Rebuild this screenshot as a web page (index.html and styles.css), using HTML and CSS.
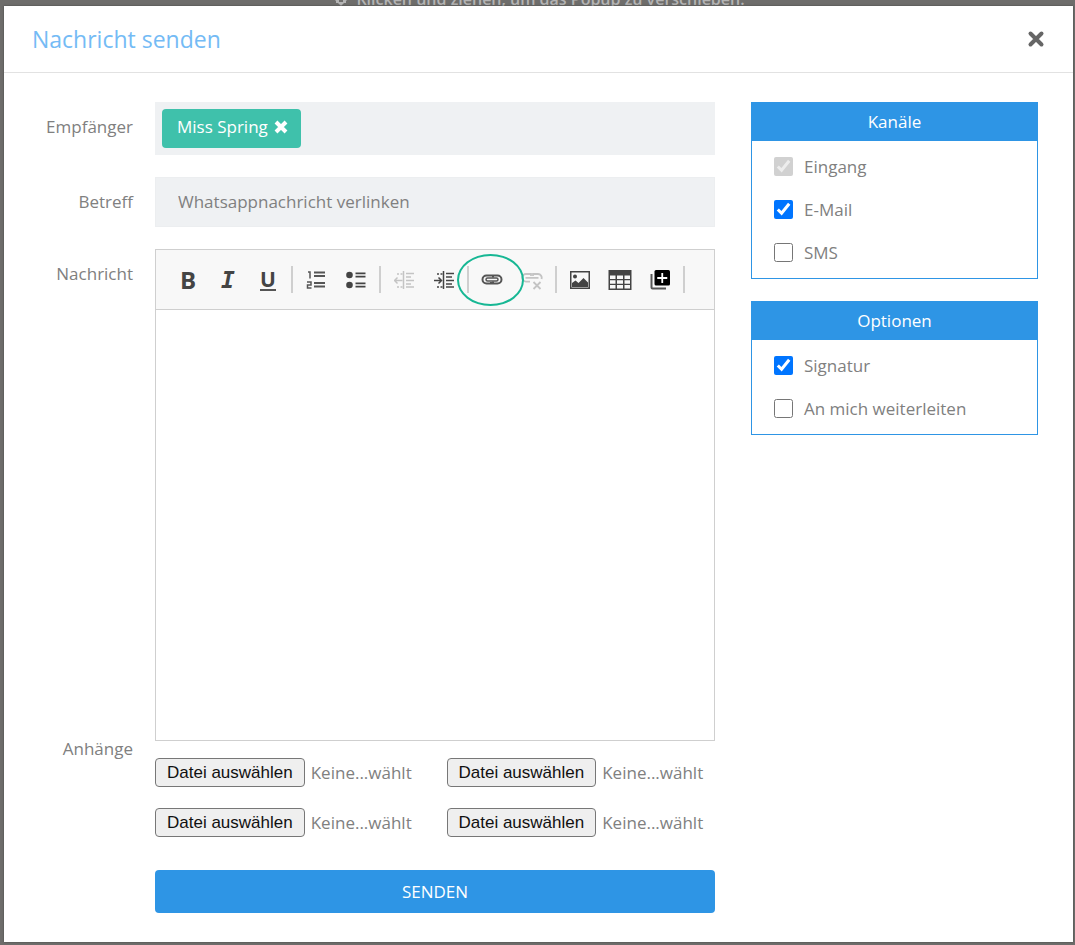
FILE: index.html
```html
<!DOCTYPE html>
<html lang="de">
<head>
<meta charset="utf-8">
<meta name="viewport" content="width=device-width, initial-scale=1">
<title>Nachricht senden</title>
<link rel="stylesheet" href="styles.css">
</head>
<body class="page">
<div class="drag-hint">
  <svg class="drag-icon" viewBox="0 0 18 18" aria-hidden="true"><path d="M9 0l4 4H5zM9 18l-4-4h8zM0 9l4-4v8zM18 9l-4 4V5z"/><path d="M2 8h14v2H2zM4 11h3v4H4zM11 11h3v4h-3z"/></svg>
  <span>Klicken und ziehen, um das Popup zu verschieben.</span>
</div>
<main class="dialog" role="dialog" aria-labelledby="title">
  <header class="dialog-head">
    <h1 class="title" id="title">Nachricht senden</h1>
    <button class="close" type="button" aria-label="Schließen">
      <svg width="18" height="18" viewBox="0 0 18 18"><path d="M3.500 3.500l11 11M14.500 3.500l-11 11"/></svg>
    </button>
  </header>
  <form class="dialog-body">
    <div class="fields">
      <div class="row">
        <span class="label label-first">Empfänger</span>
        <div class="recipients">
          <span class="tag">Miss Spring
            <button class="tag-remove" type="button" aria-label="Entfernen"><svg width="14" height="14" viewBox="0 0 14 14"><path d="M2 2l10 10M12 2L2 12"/></svg></button>
          </span>
        </div>
      </div>
      <div class="row">
        <label class="label label-first" for="subject">Betreff</label>
        <input class="subject" id="subject" type="text" value="Whatsappnachricht verlinken">
      </div>
      <div class="row">
        <label class="label label-first" for="message">Nachricht</label>
        <div class="editor">
          <div class="toolbar" role="toolbar">
            <button class="tool glyph-b" type="button" aria-label="Fett">B</button>
            <button class="tool glyph-i" type="button" aria-label="Kursiv">I</button>
            <button class="tool glyph-u" type="button" aria-label="Unterstrichen"><span class="underlined">U</span></button>
            <span class="sep"></span>
            <button class="tool" type="button" aria-label="Nummerierte Liste">
              <svg width="20" height="20" viewBox="0 0 20 20" fill="none" stroke="#555" stroke-width="1.500"><path d="M2 2h2v6.500M1 12h4v3H1.500v3H5.500"/><path d="M8 2.500h11M8 6h11M8 13h11M8 16.500h11" stroke-width="2"/></svg>
            </button>
            <button class="tool" type="button" aria-label="Aufzählung">
              <svg width="20" height="20" viewBox="0 0 20 20" fill="#444"><circle cx="3.500" cy="5" r="3.300"/><circle cx="3.500" cy="15" r="3.300"/><path d="M9.500 2.500h10v1.800h-10zM9.500 5.700h10v1.800h-10zM9.500 12.500h10v1.800h-10zM9.500 15.700h10v1.800h-10z"/></svg>
            </button>
            <span class="sep"></span>
            <button class="tool" type="button" aria-label="Einzug verkleinern" disabled>
              <svg width="20" height="20" viewBox="0 0 20 20" fill="none" stroke="#c4c4c4" stroke-width="1.500"><path d="M9.500 1v18"/><path d="M12 3.500h8M12 7h5M12 10.500h8M12 14h5M12 17h8M0.500 10.500h8M3.500 7.500l-3 3 3 3"/><path d="M3 4h2M6.500 4h2M3 17h2M6.500 17h2"/></svg>
            </button>
            <button class="tool" type="button" aria-label="Einzug vergrößern">
              <svg width="20" height="20" viewBox="0 0 20 20" fill="none" stroke="#444" stroke-width="1.500"><path d="M9.500 1v18"/><path d="M12 3.500h8M12 7h6M12 10.500h8M12 14h6M12 17h8M0 10.500h7M4.500 7.500l3 3-3 3"/><path d="M3 4h2M6.500 4h2M3 17h2M6.500 17h2"/></svg>
            </button>
            <span class="sep"></span>
            <button class="tool tool-marked" type="button" aria-label="Link einfügen">
              <svg width="22" height="20" viewBox="0 0 22 20" fill="none" stroke="#555" stroke-width="2"><path d="M10 6.500V5.500H5.500a4 4 0 0 0 0 8H10V12M12 7.500v-2h4.500a4 4 0 0 1 0 8H12v-2"/><rect x="5" y="8" width="12" height="3" rx="1.500" stroke-width="1.500"/></svg>
              <span class="marker"></span>
            </button>
            <button class="tool" type="button" aria-label="Link entfernen" disabled>
              <svg width="22" height="20" viewBox="0 0 22 20" fill="none" stroke="#c4c4c4" stroke-width="1.800"><path d="M10 6V4H5a3.800 3.800 0 0 0 0 7.600h4M12 6V4h5a3.800 3.800 0 0 1 3.500 5M4.500 7.800h13"/><path d="M12.500 12l7 7M19.500 12l-7 7"/></svg>
            </button>
            <span class="sep"></span>
            <button class="tool" type="button" aria-label="Bild">
              <svg width="22" height="20" viewBox="0 0 22 20" fill="#444"><path d="M1.750 1.750h18.500v16.500H1.750z" fill="none" stroke="#444" stroke-width="1.500"/><circle cx="6" cy="6.500" r="2"/><path d="M3 17v-4l3.500-2.500 3 2.500 5-5L19 12.500V17z"/></svg>
            </button>
            <button class="tool" type="button" aria-label="Tabelle">
              <svg width="24" height="22" viewBox="0 0 24 22" fill="#444"><path d="M.500 1h23v20H.500zM2 6.500v3.500h5.500V6.500zM9 6.500v3.500h6V6.500zM16.500 6.500v3.500H22V6.500zM2 11.200v3.600h5.500v-3.600zM9 11.200v3.600h6v-3.600zM16.500 11.200v3.600H22v-3.600zM2 16v3.500h5.500V16zM9 16v3.500h6V16zM16.500 16v3.500H22V16z" fill-rule="evenodd"/></svg>
            </button>
            <button class="tool" type="button" aria-label="Vorlage einfügen">
              <svg width="20" height="20" viewBox="0 0 20 20"><path d="M.500 4h2v13.500H16v2H2.500a2 2 0 0 1-2-2z" fill="#555"/><rect x="4.500" y="0" width="15.500" height="15.500" rx="1.500"/><path d="M12.250 3v10M7.250 8h10" stroke="#fff" stroke-width="1.800"/></svg>
            </button>
            <span class="sep"></span>
          </div>
          <textarea class="message" id="message"></textarea>
        </div>
      </div>
      <div class="row row-files">
        <span class="label">Anhänge</span>
        <div class="files">
          <div class="file"><input class="file-input" type="file" id="file1"><label class="file-button" for="file1">Datei auswählen</label><span>Keine...wählt</span></div>
          <div class="file"><input class="file-input" type="file" id="file2"><label class="file-button" for="file2">Datei auswählen</label><span>Keine...wählt</span></div>
          <div class="file"><input class="file-input" type="file" id="file3"><label class="file-button" for="file3">Datei auswählen</label><span>Keine...wählt</span></div>
          <div class="file"><input class="file-input" type="file" id="file4"><label class="file-button" for="file4">Datei auswählen</label><span>Keine...wählt</span></div>
          <button class="send" type="submit">SENDEN</button>
        </div>
      </div>
    </div>
    <aside class="side">
      <fieldset class="panel">
        <legend class="panel-head">Kanäle</legend>
        <div class="options">
          <label class="option"><input class="check" type="checkbox" checked disabled>Eingang</label>
          <label class="option"><input class="check" type="checkbox" checked>E-Mail</label>
          <label class="option"><input class="check" type="checkbox">SMS</label>
        </div>
      </fieldset>
      <fieldset class="panel">
        <legend class="panel-head">Optionen</legend>
        <div class="options">
          <label class="option"><input class="check" type="checkbox" checked>Signatur</label>
          <label class="option"><input class="check" type="checkbox">An mich weiterleiten</label>
        </div>
      </fieldset>
    </aside>
  </form>
</main>
</body>
</html>
```
FILE: styles.css
```css
*, *::before, *::after { box-sizing: border-box; }

.page {
  margin: 0;
  min-height: 100vh;
  padding: 0 2px 3px 4px;
  display: flex;
  flex-direction: column;
  background: #6e6d6b;
  color: #808080;
  font: 17px/24px "Open Sans", sans-serif;
}

button, input, textarea { font: inherit; color: inherit; }
button { border: 0; padding: 0; background: none; cursor: pointer; }
svg { display: block; flex: none; }

.drag-hint {
  height: 6px;
  display: flex;
  align-items: flex-end;
  justify-content: center;
  gap: 6px;
  overflow: hidden;
  color: #b4b4b4;
  font-weight: 600;
  font-size: 16px;
  line-height: 14px;
}
.drag-icon { width: 18px; height: 18px; fill: #b4b4b4; }

.dialog {
  flex: 1;
  background: #fff;
  box-shadow: 0 0 2px #444;
}
.dialog-head {
  display: flex;
  align-items: center;
  justify-content: space-between;
  height: 67px;
  padding: 0 28px;
  border-bottom: 1px solid #e2e2e2;
}
.title { margin: 0; font-size: 23px; line-height: 32px; font-weight: 400; color: #74bbf5; }
.close svg { fill: none; stroke: #666; stroke-width: 4; stroke-linecap: round; }

.dialog-body {
  display: grid;
  grid-template-columns: minmax(0, 1fr) 287px;
  align-items: start;
  gap: 36px;
  padding: 29px 35px 28px 28px;
}
.fields { display: flex; flex-direction: column; gap: 22px; }
.row {
  display: grid;
  grid-template-columns: 101px minmax(0, 1fr);
  column-gap: 22px;
}
.label { text-align: right; }
.label-first { padding-top: 13px; }

.recipients { padding: 7px; background: #eff1f3; display: flex; }
.tag {
  display: flex;
  align-items: center;
  gap: 6px;
  height: 39px;
  padding: 0 13px 3px 15px;
  border-radius: 4px;
  background: #3fc1ab;
  color: #fff;
}
.tag-remove svg { fill: none; stroke: #fff; stroke-width: 4; }
.subject {
  width: 100%;
  height: 50px;
  padding: 0 22px 2px;
  border: 1px solid #eceef0;
  border-radius: 0;
  background: #eff1f3;
}

.editor { border: 1px solid #cfcfcf; }
.toolbar {
  display: flex;
  align-items: center;
  height: 60px;
  padding-left: 12px;
  background: #f8f8f8;
  border-bottom: 1px solid #cfcfcf;
}
.tool {
  flex: 0 1 40px;
  height: 40px;
  display: flex;
  align-items: center;
  justify-content: center;
  color: #444;
}
.glyph-b { font-size: 24px; font-weight: 700; }
.glyph-i { font: italic 700 23px/24px "DejaVu Sans Mono", monospace; }
.glyph-u { font-size: 21px; font-weight: 700; }
.underlined { border-bottom: 2px solid #555; line-height: 20px; }
.sep { flex: none; width: 2px; height: 27px; margin: 0 3px; background: #cfcfcf; }
.tool-marked { position: relative; }
.marker {
  position: absolute;
  top: -6px;
  left: -15px;
  width: 67px;
  height: 52px;
  border: 2px solid #17b794;
  border-radius: 50%;
  pointer-events: none;
  z-index: 1;
}
.message {
  display: block;
  width: 100%;
  height: 430px;
  padding: 16px;
  border: 0;
  resize: none;
  outline: 0;
}

.row-files { margin-top: -26px; }
.files {
  display: grid;
  grid-template-columns: repeat(2, minmax(0, 1fr));
  gap: 21px 23px;
  padding-top: 21px;
}
.file { display: flex; align-items: center; gap: 6px; white-space: nowrap; position: relative; }
.file-input { position: absolute; width: 1px; height: 1px; opacity: 0; }
.file-button {
  padding: 0 11px;
  border: 1px solid #777;
  border-radius: 4px;
  background: #efefef;
  color: #111;
  font: 17px/27px "Liberation Sans", sans-serif;
}
.send {
  grid-column: 1 / -1;
  height: 43px;
  margin-top: 12px;
  border-radius: 4px;
  background: #2e95e5;
  color: #fff;
}

.side { display: flex; flex-direction: column; gap: 22px; }
.panel { margin: 0; padding: 0; min-width: 0; border: 1px solid #2e95e5; border-top: 0; }
.panel-head {
  float: left;
  width: 100%;
  padding: 0;
  background: #2e95e5;
  color: #fff;
  line-height: 39px;
  text-align: center;
}
.options { clear: both; padding: 4px 22px; }
.option { display: flex; align-items: center; gap: 11px; height: 43px; }
.check { width: 19px; height: 19px; margin: 0; accent-color: #0075ff; }
```
